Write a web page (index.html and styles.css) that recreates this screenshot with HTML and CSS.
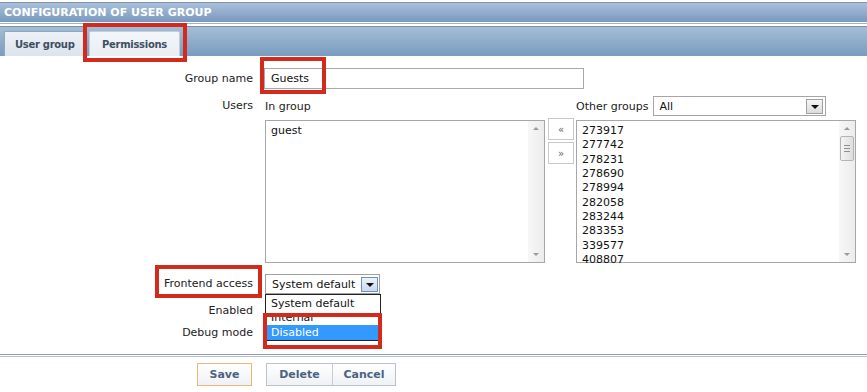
FILE: index.html
```html
<!DOCTYPE html>
<html>
<head>
<meta charset="utf-8">
<title>Configuration of user group</title>
<link rel="stylesheet" href="styles.css">
</head>
<body>
<div class="page">
  <div class="header">CONFIGURATION OF USER GROUP</div>
  <div class="tabwrap">
    <div class="tabbar">
      <div class="tab tab-active">User group</div>
      <div class="tab">Permissions</div>
    </div>
  </div>

  <div class="form">
    <div class="row row-name">
      <div class="label">Group name</div>
      <div class="field"><div class="input">Guests</div></div>
    </div>

    <div class="row row-users">
      <div class="label label-top">Users</div>
      <div class="field users">
        <div class="col">
          <div class="colhead">In group</div>
          <div class="listbox">
            <div class="items"><div>guest</div></div>
            <div class="sb">
              <span class="sb-up"></span>
              <span class="sb-fill"></span>
              <span class="sb-down"></span>
            </div>
          </div>
        </div>
        <div class="movers">
          <div class="mv">«</div>
          <div class="mv">»</div>
        </div>
        <div class="col">
          <div class="colhead">
            <span class="colhead-text">Other groups</span>
            <div class="select sel-groups"><span class="sel-text">All</span><span class="arrow arrow-gray"><span class="tri"></span></span></div>
          </div>
          <div class="listbox">
            <div class="items">
              <div>273917</div>
              <div>277742</div>
              <div>278231</div>
              <div>278690</div>
              <div>278994</div>
              <div>282058</div>
              <div>283244</div>
              <div>283353</div>
              <div>339577</div>
              <div>408807</div>
            </div>
            <div class="sb">
              <span class="sb-up"></span>
              <span class="sb-thumb"><span class="grip"></span><span class="grip"></span><span class="grip"></span></span>
              <span class="sb-fill"></span>
              <span class="sb-down"></span>
            </div>
          </div>
        </div>
      </div>
    </div>

    <div class="row row-frontend">
      <div class="label">Frontend access</div>
      <div class="field">
        <div class="dropwrap">
          <div class="select sel-frontend"><span class="sel-text">System default</span><span class="arrow arrow-blue"><span class="tri"></span></span></div>
          <div class="droplist">
            <div class="opt">System default</div>
            <div class="opt">Internal</div>
            <div class="opt opt-sel">Disabled</div>
          </div>
        </div>
      </div>
    </div>

    <div class="row row-enabled">
      <div class="label">Enabled</div>
      <div class="field"></div>
    </div>

    <div class="row row-debug">
      <div class="label">Debug mode</div>
      <div class="field"></div>
    </div>
  </div>

  <div class="separator"></div>

  <div class="buttons">
    <div class="btn btn-save">Save</div>
    <div class="btngroup">
      <div class="btn btn-delete">Delete</div>
      <div class="btn btn-cancel">Cancel</div>
    </div>
  </div>

  <div class="mark mark-perm"></div>
  <div class="mark mark-name"></div>
  <div class="mark mark-frontend"></div>
  <div class="mark mark-disabled"></div>
</div>
</body>
</html>
```

FILE: styles.css
```css
* { box-sizing: border-box; }

html, body {
  margin: 0;
  padding: 0;
  background: #fff;
}

body {
  font-family: "DejaVu Sans", Verdana, sans-serif;
  font-size: 11px;
  color: #222;
}

.page {
  position: relative;
  width: 867px;
  height: 392px;
  overflow: hidden;
}

/* ---------- header ---------- */
.header {
  margin-top: 2px;
  border-top: 1px solid #8393ab;
  height: 20px;
  line-height: 19px;
  padding-left: 4px;
  background: linear-gradient(#a8bfd9, #7a99c0);
  color: #fff;
  font-weight: bold;
}

.tabwrap {
  margin-top: 1px;
  border-top: 1px solid #a2b3c7;
  padding-top: 2px;
}

.tabbar {
  border-top: 1px solid #7c8fa9;
  height: 30px;
  padding: 4px 0 0 4px;
  background: linear-gradient(#a3bdd5, #799cc0);
  display: flex;
  align-items: flex-end;
  gap: 3px;
}

.tab {
  height: 25px;
  line-height: 25px;
  padding: 0 10px;
  font-size: 10px;
  letter-spacing: -0.3px;
  font-weight: bold;
  color: #3e4e62;
  background: linear-gradient(#f3f6f9, #e9eef3);
  border: 1px solid #c3cfdc;
  border-bottom: none;
  border-radius: 2px 2px 0 0;
}

.tab-active {
  width: 82px;
  background: linear-gradient(#eef2f6, #dbe3ec);
  border-color: #91a6bf;
}

.tab + .tab { width: 91px; text-align: center; }

/* ---------- form ---------- */
.form {
  padding-top: 12px;
}

.row {
  display: flex;
  column-gap: 11px;
}

.label {
  width: 253px;
  flex: none;
  text-align: right;
  color: #222;
}

.row-name { height: 21px; }
.row-name .label { line-height: 21px; }

.row-users { margin-top: 7px; height: 167px; }
.label-top { line-height: 20px; }

.row-frontend { margin-top: 11px; height: 20px; }
.row-frontend .label { line-height: 20px; }

.row-enabled { margin-top: 7px; height: 20px; }
.row-enabled .label { line-height: 20px; }

.row-debug { margin-top: 2px; height: 20px; }
.row-debug .label { line-height: 20px; }

.input {
  width: 320px;
  height: 21px;
  border: 1px solid #a9a9a9;
  background: #fff;
  padding-left: 6px;
  line-height: 19px;
  color: #111;
}

/* users block */
.users {
  display: flex;
  margin-left: 1px;
}

.col {
  width: 280px;
  display: flex;
  flex-direction: column;
}

.colhead {
  height: 20px;
  margin-bottom: 4px;
  display: flex;
  align-items: center;
  gap: 5px;
}

.colhead-text { white-space: nowrap; }

.listbox {
  height: 143px;
  border: 1px solid #a7a7a7;
  display: flex;
  background: #fff;
}

.items {
  flex: 1;
  padding: 3px 0 0 5px;
  line-height: 14.33px;
  color: #111;
}

.sb {
  width: 16px;
  flex: none;
  background: linear-gradient(90deg, #f7f7f7, #ececec);
  display: flex;
  flex-direction: column;
  align-items: center;
  padding: 6px 0 6px;
}

.sb-up, .sb-down {
  width: 0;
  height: 0;
  border-left: 3px solid transparent;
  border-right: 3px solid transparent;
}

.sb-up { border-bottom: 3px solid #9a9a9a; }
.sb-down { border-top: 3px solid #9a9a9a; }

.sb-fill { flex: 1; }

.sb-thumb {
  margin-top: 6px;
  width: 14px;
  height: 25px;
  border: 1px solid #b4b4b4;
  border-radius: 2px;
  background: linear-gradient(90deg, #f4f4f4, #dedede);
  display: flex;
  flex-direction: column;
  align-items: center;
  justify-content: center;
  gap: 2px;
}

.grip {
  width: 6px;
  height: 1px;
  background: #8f8f8f;
}

.movers {
  width: 26px;
  margin: 22px 2px 0 3px;
  display: flex;
  flex-direction: column;
  gap: 2px;
}

.mv {
  height: 22px;
  border: 1px solid #c9c9c9;
  background: #fff;
  color: #666;
  font-size: 10px;
  display: flex;
  align-items: center;
  justify-content: center;
}

/* selects */
.select {
  position: relative;
  height: 20px;
  border: 1px solid #a5a5a5;
  background: #fff;
  display: flex;
  align-items: center;
  justify-content: space-between;
  color: #111;
}

.sel-groups {
  width: 173px;
  padding-left: 5px;
  padding-right: 2px;
}

.sel-frontend {
  width: 115px;
  height: 20px;
  padding-left: 6px;
  padding-right: 1px;
  border-color: #a0a0a0;
}

.arrow {
  width: 17px;
  height: 15px;
  display: flex;
  align-items: center;
  justify-content: center;
}

.arrow-gray {
  border: 1px solid #a0a0a0;
  background: linear-gradient(#f6f6f6, #dcdcdc);
}

.arrow-blue {
  border: 1px solid #6f91bd;
  background: linear-gradient(#eef3fa, #c9d8ec);
}

.tri {
  width: 0;
  height: 0;
  border-left: 4px solid transparent;
  border-right: 4px solid transparent;
  border-top: 4px solid #111;
  margin-top: 2px;
}

.dropwrap {
  position: relative;
  margin-left: 1px;
}

.droplist {
  position: absolute;
  top: 20px;
  left: 0;
  width: 116px;
  padding-top: 2px;
  border: 1px solid #222;
  background: #fff;
  z-index: 2;
}

.opt {
  height: 14px;
  line-height: 14px;
  padding-left: 5px;
  color: #111;
  white-space: nowrap;
}

.opt-sel {
  background: #3399ff;
  color: #fff;
  height: 15px;
  line-height: 15px;
}

/* footer */
.separator {
  margin-top: 11px;
  height: 3px;
  border-top: 1px solid #8ea0b9;
  border-bottom: 1px solid #b3c1d3;
}

.buttons {
  margin-top: 6px;
  padding-left: 197px;
  display: flex;
  gap: 14px;
}

.btngroup { display: flex; }

.btn {
  height: 23px;
  line-height: 21px;
  text-align: center;
  font-weight: bold;
  color: #4d6280;
  border: 1px solid #b9c3cf;
  background: linear-gradient(#ffffff, #eef1f5);
}

.btn-save {
  width: 55px;
  border-color: #e8b878;
}

.btn-delete { width: 67px; }
.btn-cancel { width: 64px; border-left-color: #c5ccd6; margin-left: -1px; }

/* red annotation frames */
.mark {
  position: absolute;
  border: 4px solid #d22b1d;
  z-index: 5;
}

.mark-perm { left: 83px; top: 23px; width: 104px; height: 39px; }
.mark-name { left: 260px; top: 57px; width: 66px; height: 37px; }
.mark-frontend { left: 155px; top: 265px; width: 107px; height: 33px; }
.mark-disabled { left: 263px; top: 313px; width: 119px; height: 36px; }
```
